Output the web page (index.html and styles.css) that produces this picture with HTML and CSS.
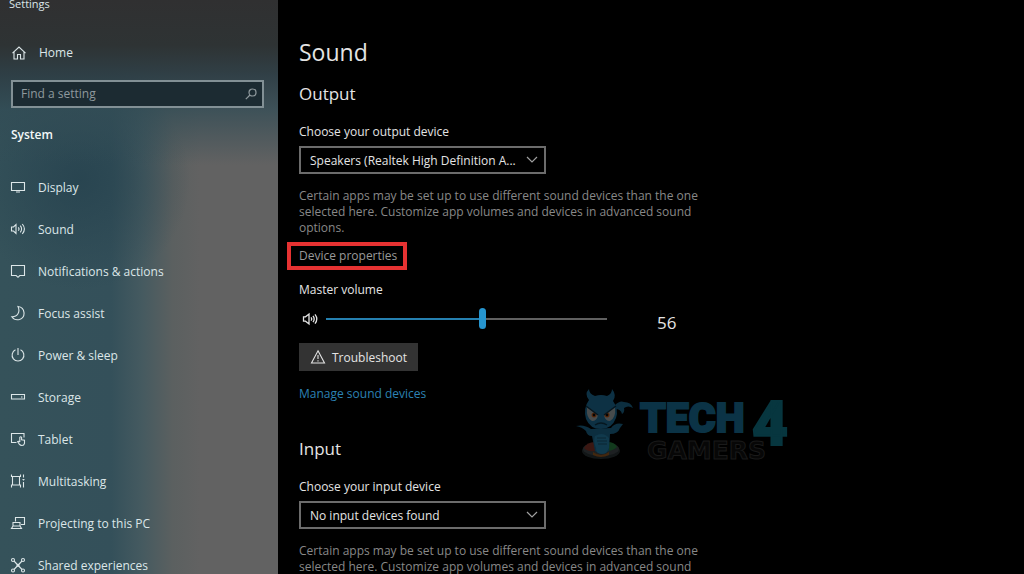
FILE: index.html
```html
<!DOCTYPE html>
<html lang="en">
<head>
    <meta charset="utf-8">
    <title>Settings</title>
    <link rel="stylesheet" href="styles.css">
</head>
<body>
    <div class="window">

        <aside class="sidebar">
            <div class="titlebar">Settings</div>

            <a class="home" href="#">
                <svg class="icon" viewBox="0 0 16 16"><path d="M1.500 8.200 8 2l6.500 6.200M3 7v7h3.500V9.500h3V14H13V7" /></svg>
                <span>Home</span>
            </a>

            <form class="search" onsubmit="return false;">
                <input type="text" aria-label="Find a setting" placeholder="Find a setting">
                <svg class="search-icon" viewBox="0 0 12 12"><circle cx="7.500" cy="4.500" r="3.500" /><path d="M5 7 .8 11.200" /></svg>
            </form>

            <h2 class="group">System</h2>

            <nav class="menu">
                <a href="#">
                    <svg class="icon" viewBox="0 0 16 16"><path d="M1.500 3.500h13v8h-13zM6 13h4" /></svg>
                    <span>Display</span>
                </a>
                <a href="#">
                    <svg class="icon" viewBox="0 0 16 16"><path d="M1.500 6v4h2L6 12.500v-9L3.500 6zM8.300 6.300q1.400 1.700 0 3.400M10.300 4.700q2.600 3.300 0 6.600M12.300 3q4.200 5 0 10" /></svg>
                    <span>Sound</span>
                </a>
                <a href="#">
                    <svg class="icon" viewBox="0 0 16 16"><path d="M1.500 2.500h13v10H9.800L8 14.300 6.200 12.500H1.500z" /></svg>
                    <span>Notifications &amp; actions</span>
                </a>
                <a href="#">
                    <svg class="icon" viewBox="0 0 16 16"><path d="M8 1.500c7.500 1 8 11 1.500 13-3 .8-6-.3-7.700-2.700C7.500 12 10.500 7 8 1.500z" /></svg>
                    <span>Focus assist</span>
                </a>
                <a href="#">
                    <svg class="icon" viewBox="0 0 16 16"><path d="M8 1v7M5.500 2.800a5.900 5.900 0 1 0 5 0" /></svg>
                    <span>Power &amp; sleep</span>
                </a>
                <a href="#">
                    <svg class="icon" viewBox="0 0 16 16"><path d="M1.500 5.500h13v4.500h-13zM11 8h1.500" /></svg>
                    <span>Storage</span>
                </a>
                <a href="#">
                    <svg class="icon" viewBox="0 0 16 16"><path d="M6.500 11.500h-5v-9h12.500v4M9.800 11V6.300q.9-1 1.800 0v2.400l2.900.6v3q-.5 2.200-2.500 2.200-1.700 0-2.700-1.300L7.600 10.600q.7-1 2.200.4" /></svg>
                    <span>Tablet</span>
                </a>
                <a href="#">
                    <svg class="icon" viewBox="0 0 16 16"><path d="M1.500 1.500v2h9v-2M1.500 14.500V12h9v2.500M2.500 3.500V12M9.500 3.500V12M13.500 1.500v3M13.500 9v5.500M13.500 6v1.500M12.500 6.500h2" /></svg>
                    <span>Multitasking</span>
                </a>
                <a href="#">
                    <svg class="icon" viewBox="0 0 16 16"><path d="M5.500 6.500v-4h9v7H11M3 7.500h7v3.500H3zM1.500 13.500h10L10 11H3z" /></svg>
                    <span>Projecting to this PC</span>
                </a>
                <a href="#">
                    <svg class="icon" viewBox="0 0 16 16"><path d="m4 4 8 8.500M12 4l-8 8.500" /><circle cx="3" cy="3" r="1.500" /><circle cx="13" cy="3" r="1.500" /><circle cx="3" cy="13.500" r="1.500" /><circle cx="13" cy="13.500" r="1.500" /><circle cx="8" cy="8.200" r="1" /></svg>
                    <span>Shared experiences</span>
                </a>
            </nav>
        </aside>

        <main class="content">
            <h1>Sound</h1>

            <section class="output">
                <h2>Output</h2>
                <label class="field-label" for="OutputDevice">Choose your output device</label>
                <div class="dropdown">
                    <select id="OutputDevice">
                        <option>Speakers (Realtek High Definition A...</option>
                    </select>
                    <svg class="chevron" viewBox="0 0 12 8"><path d="m1 1 5 5 5-5" /></svg>
                </div>
                <p class="hint">Certain apps may be set up to use different sound devices than the one selected here. Customize app volumes and devices in advanced sound options.</p>
                <a class="device-link" href="#">Device properties</a>

                <label class="field-label volume-label" for="MasterVolume">Master volume</label>
                <div class="volume">
                    <svg class="icon speaker" viewBox="0 0 16 16"><path d="M1.500 5.800v4.400h2L7 13V3L3.500 5.800zM9 6.300q1.400 1.700 0 3.400M11 4.800q2.400 3.200 0 6.400M13 3.300q3.600 4.700 0 9.400" /></svg>
                    <input type="range" id="MasterVolume" min="0" max="100" value="56">
                    <output for="MasterVolume">56</output>
                </div>

                <button type="button" class="troubleshoot">
                    <svg class="icon" viewBox="0 0 16 16"><path d="M8 1.800 14.500 14h-13zM8 6v4M8 11.300v1.300" /></svg>
                    <span>Troubleshoot</span>
                </button>
                <a class="manage" href="#">Manage sound devices</a>
            </section>

            <section class="input">
                <h2>Input</h2>
                <label class="field-label" for="InputDevice">Choose your input device</label>
                <div class="dropdown">
                    <select id="InputDevice">
                        <option>No input devices found</option>
                    </select>
                    <svg class="chevron" viewBox="0 0 12 8"><path d="m1 1 5 5 5-5" /></svg>
                </div>
                <p class="hint">Certain apps may be set up to use different sound devices than the one selected here. Customize app volumes and devices in advanced sound options.</p>
            </section>

            <svg class="watermark" viewBox="0 0 220 74" role="img" aria-label="Tech4Gamers">
                <ellipse cx="26" cy="63" rx="19" ry="8" fill="#121617" />
                <ellipse cx="26" cy="61" rx="18" ry="7" fill="#1d2022" />
                <path d="M9 60q3-6 11-6v9q-7 1-11-3z" fill="#3b1712" />
                <path d="M32 54q8 0 10 5-4 4-10 4z" fill="#123a1d" />
                <path d="M18 64q8 6 16 0v3q-8 4-16 0z" fill="#43280f" />
                <path d="M1 38q8-2 15 3l20-1q4-6 12-4l-3 4q-2 6-10 6l-1 17q-7 5-14 0l-3-15q-5 0-6-5-4-4-10-5z" fill="#0c2e3f" />
                <path d="M20 48q8-5 14 2v10q-2 4-3 5-4 2-8 0-2-1-2-5-3-7-1-12z" fill="#10394c" />
                <path d="M22 50h9M22 53h10M23 56h9" fill="none" stroke="#0a2633" />
                <path d="M40 17q5-5 9-3 7 0 9 6-5-3-9 0 1 4-2 6-1-5-7-5z" fill="#0c2e3f" />
                <path d="M14 12Q9 6 14 1q0 5 6 7 6-2 12 0 5-2 5-7 5 6 1 12 6 8 3 17-4 11-15 11T11 31q-3-11 3-19z" fill="#0d3144" />
                <path d="M12 20q1-2 11 7-1 6-6 6-6-3-5-13zM40 20q-1-2-11 7 1 6 6 6 6-3 5-13z" fill="#474b4c" />
                <circle cx="19" cy="27" r="2.500" fill="#5a2a0d" /><circle cx="32" cy="27" r="2.500" fill="#5a2a0d" />
                <circle cx="19" cy="27" r="1.400" fill="#050505" /><circle cx="32" cy="27" r="1.400" fill="#050505" />
                <path d="m11 18 12 9M41 18l-12 9M20 37q6-4 12 0" fill="none" stroke="#061720" stroke-width="1.500" />
                <text class="mark-tech" x="65" y="44">TECH</text>
                <text class="mark-four" x="177" y="57">4</text>
                <text class="mark-gamers" x="72" y="71">GAMERS</text>
            </svg>
        </main>

    </div>
</body>
</html>
```

FILE: styles.css
```css
* { box-sizing: border-box; }
body { margin: 0; background-color: #000; color: #e4e4e4; font-family: "Open Sans", "Noto Sans", sans-serif; font-size: 12px; line-height: 16px; }
h1, h2, p { margin: 0; }
a { color: inherit; text-decoration: none; }
input, select, button { margin: 0; color: inherit; font-family: inherit; font-size: inherit; }

.window { display: flex; height: 100vh; overflow: hidden; }
.icon { flex: none; width: 16px; height: 16px; fill: none; stroke: currentColor; stroke-width: 1.1; }

/* left pane */
.sidebar {
    flex: none;
    width: 278px;
    color: #dce6e8;
    background-color: #34505a;
    background-image:
        linear-gradient(to bottom, #303031 0, #2e3334 45px, rgba(46, 62, 69, 0.95) 75px, rgba(50, 76, 85, 0.75) 110px, rgba(56, 78, 86, 0) 165px),
        radial-gradient(circle at 80px 180px, rgba(38, 66, 78, 0.8), rgba(38, 66, 78, 0) 110px),
        linear-gradient(to right, #35525a 0%, #34505a 40%, #455a60 51%, #5b6060 62%, #626262 72%, #626262 100%);
}
.titlebar { height: 8px; padding-left: 9px; font-size: 11px; line-height: 8px; }
.home { display: flex; align-items: center; gap: 12px; height: 30px; margin-top: 30px; padding-left: 11px; }
.search { position: relative; margin: 12px 14px 0 11px; }
.search input { display: block; width: 100%; height: 28px; padding: 0 32px 2px 8px; border: solid 2px #829095; border-radius: 0; background-color: #1c2b32; outline: none; }
.search input::placeholder { color: #8f999d; opacity: 1; }
.search-icon { position: absolute; top: 8px; right: 7px; width: 12px; height: 12px; fill: none; stroke: #8f999d; stroke-width: 1.2; }
.group { margin: 19px 0 24px 11px; color: #f4f8f8; font-size: 12px; font-weight: 600; line-height: 16px; }
.menu a { display: flex; align-items: center; gap: 12px; height: 42px; padding-left: 10px; }
.menu .icon { margin-bottom: 3px; }

/* right pane */
.content { position: relative; flex: 1; min-width: 0; padding: 36px 20px 0 21px; }
h1 { font-size: 23px; font-weight: 400; line-height: 32px; }
.content h2 { font-size: 17px; font-weight: 400; line-height: 24px; }
.output h2 { margin-top: 14px; }
.field-label { display: block; margin-top: 18px; }
.dropdown { position: relative; width: 247px; margin-top: 6px; }
.dropdown select { display: block; width: 100%; height: 28px; padding: 0 20px 0 9px; border: solid 2px #6c6c6c; border-radius: 0; background-color: #000; appearance: none; outline: none; }
.chevron { position: absolute; top: 10px; right: 8px; width: 12px; height: 8px; fill: none; stroke: #a0a0a0; stroke-width: 1.2; pointer-events: none; }
.hint { max-width: 400px; margin-top: 14px; color: #888; }
.device-link { display: block; width: 120px; margin: 6px 0 0 -12px; padding: 2px 8px; border: solid 4px #e63232; color: #999; white-space: nowrap; }
.volume-label { margin-top: 12px; }
.volume { display: flex; align-items: center; height: 42px; }
.volume .speaker { margin: 0 8px 0 3px; stroke-width: 1.3; }
.volume output { margin-left: 50px; padding-top: 8px; font-size: 17px; line-height: 24px; }
.volume input { width: 281px; height: 22px; background: transparent; appearance: none; outline: none; }
.volume input::-webkit-slider-runnable-track { height: 2px; background: linear-gradient(to right, #2580b0 56%, #606060 56%); }
.volume input::-webkit-slider-thumb { width: 7px; height: 21px; margin-top: -10px; border-radius: 4px; background-color: #2695cf; appearance: none; }
.troubleshoot { display: flex; align-items: center; gap: 6px; height: 28px; margin-top: 3px; padding: 0 11px; border: 0; background-color: #333; }
.manage { display: block; margin-top: 15px; color: #2c82b4; }
.input { margin-top: 35px; }

.watermark { position: absolute; top: 388px; left: 297px; width: 220px; height: 74px; pointer-events: none; }
.watermark text { font-family: Roboto, sans-serif; font-weight: 900; }
.watermark .mark-tech { fill: #0b3346; stroke: #0b3346; stroke-width: 2; font-size: 41px; }
.watermark .mark-four { fill: #07363f; stroke: #07363f; stroke-width: 2; font-size: 62px; }
.watermark .mark-gamers { fill: #070707; stroke: #1a1a1a; font-family: "DejaVu Sans", sans-serif; font-size: 25px; font-weight: 700; }
```
